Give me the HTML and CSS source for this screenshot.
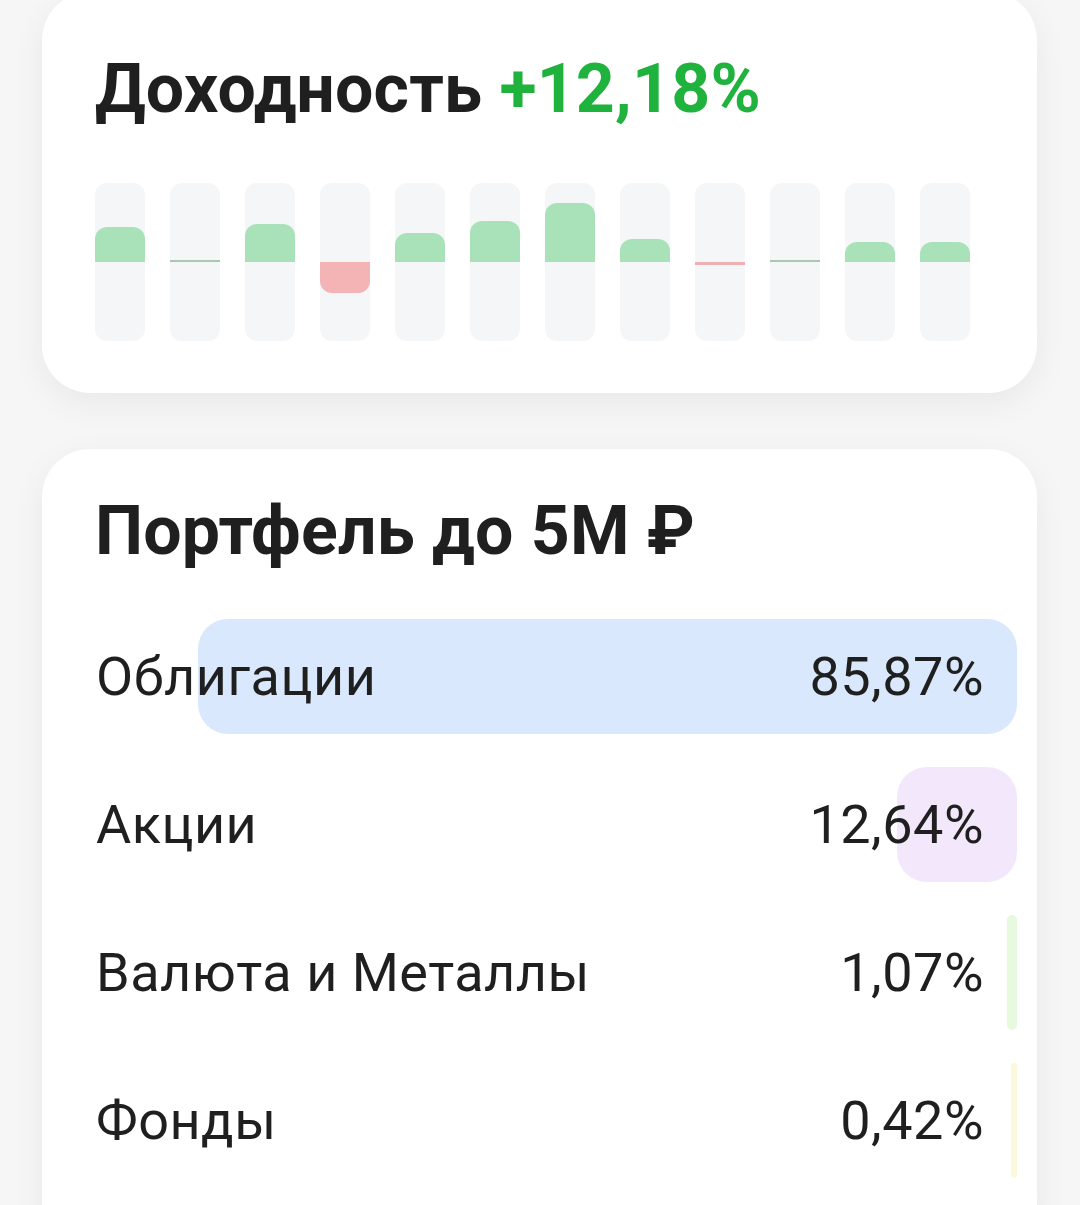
FILE: index.html
```html
<!DOCTYPE html>
<html lang="ru">
<head>
<meta charset="utf-8">
<title>Портфель</title>
<meta name="viewport" content="width=device-width, initial-scale=1">
<link rel="stylesheet" href="styles.css">
</head>
<body>
  <div class="page">
    <section class="card card_yield">
      <h2 class="title">Доходность <span class="plus">+12,18%</span></h2>
      <div class="months">
        <div class="month"><div class="up" style="height:35px"></div></div>
        <div class="month"><div class="up line" style="height:2px"></div></div>
        <div class="month"><div class="up" style="height:38px"></div></div>
        <div class="month"><div class="down" style="height:31px"></div></div>
        <div class="month"><div class="up" style="height:29px"></div></div>
        <div class="month"><div class="up" style="height:41px"></div></div>
        <div class="month"><div class="up" style="height:59px"></div></div>
        <div class="month"><div class="up" style="height:23px"></div></div>
        <div class="month"><div class="down line" style="height:3px"></div></div>
        <div class="month"><div class="up line" style="height:2px"></div></div>
        <div class="month"><div class="up" style="height:20px"></div></div>
        <div class="month"><div class="up" style="height:20px"></div></div>
      </div>
    </section>

    <section class="card card_mix">
      <h2 class="title title_mix">Портфель до 5М ₽</h2>
      <div class="rows">
        <div class="row">
          <div class="fill c_bonds" style="width:86.2%"></div>
          <span class="name">Облигации</span>
          <span class="val">85,87%</span>
        </div>
        <div class="row">
          <div class="fill c_shares" style="width:12.6%"></div>
          <span class="name">Акции</span>
          <span class="val">12,64%</span>
        </div>
        <div class="row">
          <div class="fill c_cur" style="width:10px"></div>
          <span class="name">Валюта и Металлы</span>
          <span class="val">1,07%</span>
        </div>
        <div class="row">
          <div class="fill c_funds" style="width:6px"></div>
          <span class="name">Фонды</span>
          <span class="val">0,42%</span>
        </div>
      </div>
    </section>
  </div>
</body>
</html>
```

FILE: styles.css
```css
body {
    margin: 0;
    background: #f6f6f7;
    font-family: Roboto, "Noto Sans", sans-serif;
    color: #1f1f1f;
}

.page {
    width: 995px;
    margin: 0 0 0 42px;
    display: flex;
    flex-direction: column;
    gap: 56px;
}

.card {
    background: #fff;
    border-radius: 48px;
    box-shadow: 0 10px 34px rgba(0, 0, 0, 0.06);
}

.card_yield {
    margin-top: -8px;
    padding: 57px 53px 52px;
}

.title {
    margin: 0;
    font-size: 68px;
    line-height: 80px;
    font-weight: 700;
    letter-spacing: 0.2px;
}
.plus { color: #1fb33e; }

.months {
    margin-top: 54px;
    display: flex;
    gap: 25px;
}

.month {
    position: relative;
    width: 50px;
    height: 158px;
    border-radius: 12px;
    background: #f5f6f8;
    overflow: hidden;
}

.up, .down {
    position: absolute;
    left: 0;
    right: 0;
}
.up {
    bottom: 50%;
    background: #a9e2b8;
    border-radius: 12px 12px 0 0;
}
.down {
    top: 50%;
    background: #f4b3b5;
    border-radius: 0 0 12px 12px;
}
.up.line { background: #a9c7b3; border-radius: 0; }
.down.line { background: #eeb0b3; border-radius: 0; }

.card_mix {
    padding: 42px 20px 80px 25px;
}
.title_mix { padding-left: 28px; }

.rows {
    margin-top: 48px;
    display: flex;
    flex-direction: column;
    gap: 33px;
}

.row {
    position: relative;
    height: 115px;
    display: flex;
    align-items: center;
    justify-content: space-between;
    padding: 0 33px 0 29px;
    font-size: 54px;
    letter-spacing: 0.5px;
}

.fill {
    position: absolute;
    top: 0;
    bottom: 0;
    right: 0;
    border-radius: 30px;
}
.c_bonds { background: #d9e8fc; }
.c_shares { background: #f3e8fb; }
.c_cur { background: #e7f9de; border-radius: 5px; }
.c_funds { background: #fbf8dc; border-radius: 3px; }

.name, .val { position: relative; }
```
